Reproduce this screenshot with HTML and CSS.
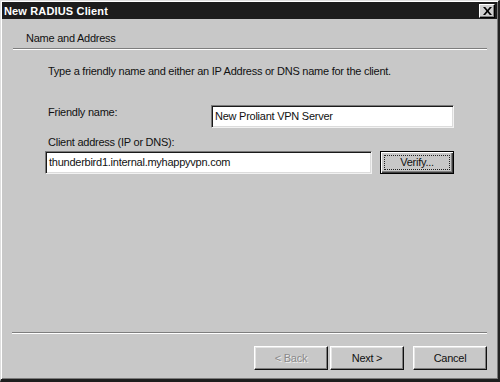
FILE: index.html
```html
<!DOCTYPE html>
<html>
<head>
<meta charset="utf-8">
<link rel="stylesheet" href="styles.css">
</head>
<body>
<div class="window">
  <div class="titlebar">
    <span class="title">New RADIUS Client</span>
    <span class="close-btn">
      <svg width="9" height="8" viewBox="0 0 9 8"><path d="M0 0h2.2l2.3 2.8L6.8 0H9L5.6 4 9 8H6.8L4.5 5.2 2.2 8H0l3.4-4z" fill="#000"/></svg>
    </span>
  </div>
  <div class="header">Name and Address</div>
  <div class="sep sep-top"></div>
  <div class="content">
    <p class="intro">Type a friendly name and either an IP Address or DNS name for the client.</p>
    <div class="row-friendly">
      <label class="lbl lbl-friendly">Friendly name:</label>
      <div class="field field-friendly">New Proliant VPN Server</div>
    </div>
    <label class="lbl lbl-client">Client address (IP or DNS):</label>
    <div class="row-client">
      <div class="field field-client">thunderbird1.internal.myhappyvpn.com</div>
      <div class="btn btn-default"><span class="focus">Verify...</span></div>
    </div>
  </div>
  <div class="sep sep-bottom"></div>
  <div class="buttons">
    <div class="btn disabled">&lt; Back</div>
    <div class="btn">Next &gt;</div>
    <div class="btn btn-cancel">Cancel</div>
  </div>
</div>
</body>
</html>
```
FILE: styles.css
```css
html, body {
  margin: 0;
  padding: 0;
  background: #c8c8c8;
}
body {
  font-family: "Liberation Sans", Arial, sans-serif;
  font-size: 11px;
  letter-spacing: -0.25px;
  color: #111;
}
.window {
  width: 500px;
  height: 382px;
  box-sizing: border-box;
  background: #c8c8c8;
  border-style: solid;
  border-width: 1px 2px 3px 1px;
  border-color: #dedede #222 #1e1e1e #dedede;
  padding: 1px;
  box-shadow: inset 1px 1px #ffffff, inset -1px -1px #7a7a7a;
  display: flex;
  flex-direction: column;
}
.titlebar {
  height: 17px;
  background: #1c1c1c;
  display: flex;
  align-items: center;
  justify-content: space-between;
  padding: 0 2px 0 2px;
}
.title {
  color: #fff;
  font-weight: bold;
  font-size: 11px;
  letter-spacing: 0.15px;
}
.close-btn {
  width: 14px;
  height: 12px;
  background: #cfcfcf;
  border: 1px solid;
  border-color: #fff #000 #000 #fff;
  box-shadow: inset -1px -1px #808080;
  display: flex;
  align-items: center;
  justify-content: center;
}
.header {
  height: 29px;
  box-sizing: border-box;
  padding: 13px 0 0 24px;
  line-height: 13px;
}
.sep {
  height: 1px;
  background: #7e7e7e;
  border-bottom: 1px solid #fff;
  margin: 0 10px 0 11px;
}
.content {
  flex: 1;
  padding: 15px 0 0 46px;
}
.intro {
  margin: 0;
  line-height: 13px;
}
.row-friendly {
  display: flex;
  margin-top: 27px;
  height: 23px;
}
.lbl {
  display: block;
  line-height: 13px;
}
.lbl-friendly {
  width: 163px;
  padding-top: 1px;
}
.field {
  box-sizing: border-box;
  height: 23px;
  background: #fff;
  border: 1px solid;
  border-color: #7a7a7a #f2f2f2 #f2f2f2 #7a7a7a;
  box-shadow: inset 1px 1px #1a1a1a, inset -1px -1px #dcdcdc;
  padding: 0 3px;
  line-height: 21px;
  white-space: nowrap;
  overflow: hidden;
}
.field-friendly {
  width: 243px;
}
.lbl-client {
  margin-top: 8px;
}
.row-client {
  display: flex;
  margin: 2px 0 0 -3px;
  gap: 8px;
}
.field-client {
  width: 327px;
}
.btn {
  box-sizing: border-box;
  width: 74px;
  height: 24px;
  background: #c8c8c8;
  border: 1px solid;
  border-color: #fff #111 #111 #fff;
  box-shadow: inset -1px -1px #7e7e7e, inset 1px 1px #e4e4e4;
  display: flex;
  align-items: center;
  justify-content: center;
  line-height: 13px;
}
.btn-default {
  height: 23px;
  border: 1px solid #000;
  box-shadow: inset 1px 1px #fff, inset -1px -1px #404040, inset -2px -2px #808080;
  padding: 3px;
}
.focus {
  flex: 1;
  align-self: stretch;
  border: 1px dotted #222;
  display: flex;
  align-items: center;
  justify-content: center;
}
.sep-bottom {
  margin: 0 10px 0 10px;
}
.buttons {
  display: flex;
  justify-content: flex-end;
  gap: 2px;
  padding: 12px 10px 8px 0;
}
.btn-cancel {
  margin-left: 7px;
}
.disabled {
  color: #8a8a8a;
  text-shadow: 1px 1px #f0f0f0;
}
```
